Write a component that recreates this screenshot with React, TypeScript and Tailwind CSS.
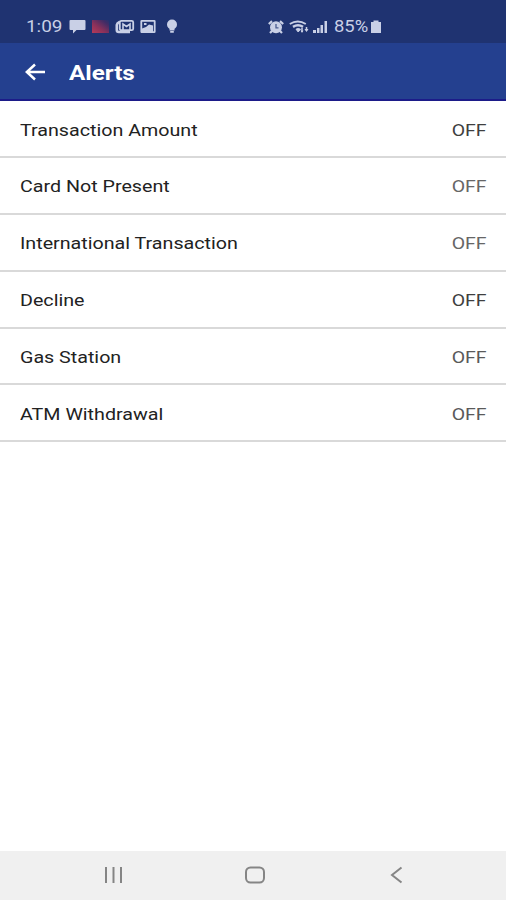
const alerts = [
  { name: 'Transaction Amount', status: 'OFF', tone: 'text-[#3f3f3f]' },
  { name: 'Card Not Present', status: 'OFF', tone: 'text-[#666666]' },
  { name: 'International Transaction', status: 'OFF', tone: 'text-[#666666]' },
  { name: 'Decline', status: 'OFF', tone: 'text-[#3f3f3f]' },
  { name: 'Gas Station', status: 'OFF', tone: 'text-[#5a5a5a]' },
  { name: 'ATM Withdrawal', status: 'OFF', tone: 'text-[#5a5a5a]' },
]

function StatusBar() {
  return (
    <div className="flex h-[43px] items-center bg-[#1f3371] pt-[10px] pl-[26px] text-[#c9d0e6]">
      <span className="w-[43px] shrink-0">
        <span className="inline-block origin-left scale-x-[1.18] text-[16px] leading-4">1:09</span>
      </span>
      <svg className="h-[15px] w-[17px]" viewBox="0 0 17 15" fill="currentColor">
        <path d="M1.5 1h14q1 0 1 1v8q0 1-1 1H7.5L4 14.5V11H1.500q-1 0-1-1V2q0-1 1-1z" />
      </svg>
      <svg className="ml-[6px] h-[15px] w-[17px]" viewBox="0 0 17 15">
        <defs>
          <linearGradient id="app" x1="0" y1="1" x2="1" y2="0">
            <stop offset="0" stopColor="#b53a59" />
            <stop offset="0.4" stopColor="#8b315a" />
            <stop offset="0.8" stopColor="#402c66" />
            <stop offset="1" stopColor="#233370" />
          </linearGradient>
        </defs>
        <rect y="1" width="17" height="13" fill="url(#app)" />
      </svg>
      <svg className="ml-[6px] h-[15px] w-[20px]" viewBox="0 0 20 15" fill="none" stroke="currentColor">
        <path d="M4.500 3Q2 4 1.800 6v5q0 2 2 2H15" strokeWidth="2.600" />
        <rect x="4.800" y="1.800" width="13.400" height="9.400" rx="1.500" strokeWidth="1.800" />
        <path d="M8 11V5l3.500 2.500L15 5v6" strokeWidth="1.600" />
      </svg>
      <svg className="ml-[5px] h-[15px] w-[16px]" viewBox="0 0 16 15">
        <rect x="1.300" y="1.800" width="13.400" height="11.400" rx="0.500" fill="none" stroke="currentColor" strokeWidth="1.800" />
        <path d="M2 9.500l4-1.500 3-2.500 4 1V13H2z" fill="currentColor" />
        <rect x="4" y="4" width="2.500" height="2" fill="currentColor" />
      </svg>
      <svg className="ml-[10px] h-[15px] w-[12px]" viewBox="0 0 12 15" fill="currentColor">
        <circle cx="6" cy="5.500" r="5" />
        <path d="M3.500 9h5v2.500h-5zM4.200 12h3.600v1.800H4.200z" />
      </svg>

      <svg className="ml-[90px] h-[14px] w-[16px]" viewBox="0 0 16 14" fill="none" stroke="currentColor">
        <circle cx="8" cy="7.300" r="6" fill="currentColor" stroke="none" />
        <path d="M8 4v3.800h2.500" stroke="#4b5c91" strokeWidth="1.300" />
        <path d="M0.800 4L4 1.200M15.200 4L12 1.200M4 11l-2 2M12 11l2 2" strokeWidth="2.200" />
      </svg>
      <svg className="ml-[5px] h-[14px] w-[21px]" viewBox="0 0 21 14" fill="none" stroke="currentColor">
        <path d="M0.800 4q8-5 16 0" strokeWidth="1.900" />
        <path d="M4 6.800q5-3 10 0" strokeWidth="2.600" />
        <path d="M7 9.200q2-1.500 4.500 0L9.200 12z" fill="currentColor" strokeWidth="1" />
        <path d="M13 8v4M17.500 7v4" strokeWidth="1.500" />
        <path d="M11.500 10.500h3L13 13zM15.500 9h4l-2 3z" fill="currentColor" stroke="none" />
      </svg>
      <svg className="ml-[3px] h-[14px] w-[15px]" viewBox="0 0 15 14" fill="currentColor">
        <path d="M0 10h3v3H0zM4 8h2.500v5H4zM7.500 5h2.500v8H7.500zM11.500 1H14v12h-2.500z" />
      </svg>
      <span className="ml-[6px] w-[36px] shrink-0">
        <span className="inline-block origin-left scale-x-[1.150] text-[16px] leading-4">85%</span>
      </span>
      <svg className="h-[13px] w-[12px]" viewBox="0 0 12 13" fill="currentColor">
        <path d="M3.500 0.500h5v1.500H11V13H1V2h2.500z" />
      </svg>
    </div>
  )
}

function NavigationBar() {
  return (
    <div className="flex h-[49px] items-center bg-[#f0f0f0] pb-[2px] pl-[103px] text-[#858585]">
      <svg className="h-[18px] w-[20px]" viewBox="0 0 20 18" fill="none" stroke="currentColor" strokeWidth="2">
        <path d="M3 1v16M10.500 1v16M18 1v16" />
      </svg>
      <svg className="ml-[121px] h-[18px] w-[22px]" viewBox="0 0 22 18" fill="none" stroke="currentColor" strokeWidth="2">
        <rect x="2" y="1.500" width="18" height="15" rx="4.500" />
      </svg>
      <svg className="ml-[124px] h-[18px] w-[14px]" viewBox="0 0 14 18" fill="none" stroke="currentColor" strokeWidth="2">
        <path d="M11.500 1.500L2 9l9.500 7.500" />
      </svg>
    </div>
  )
}

export default function App() {
  return (
    <div className="flex h-[900px] w-[506px] flex-col overflow-hidden bg-white font-['Roboto',sans-serif]">
      <StatusBar />
      <header className="flex h-[58px] items-center border-b-2 border-[#1c1b89] bg-[#24408f] pl-[25px] text-white">
        <svg className="mt-px h-[18px] w-[21px]" viewBox="0 0 21 18" fill="none" stroke="currentColor" strokeWidth="2.500">
          <path d="M20 9H2M10 1.500L1.800 9l8.200 7.500" />
        </svg>
        <h1 className="mt-[3px] ml-[23px] origin-left scale-x-[1.210] text-[20px] leading-6 font-bold">Alerts</h1>
      </header>
      <ul className="flex-1 pt-[0.500px]">
        {alerts.map((alert) => (
          <li
            key={alert.name}
            className="flex h-[56.800px] items-center justify-between border-b-2 border-[#d9d9d9] pr-[19px] pl-[20px] text-[16.500px]"
          >
            <span className="origin-left scale-x-[1.192] pt-[4px] text-[#222222]">{alert.name}</span>
            <span className={`origin-right scale-x-[1.180] pt-[4px] ${alert.tone}`}>{alert.status}</span>
          </li>
        ))}
      </ul>
      <NavigationBar />
    </div>
  )
}
